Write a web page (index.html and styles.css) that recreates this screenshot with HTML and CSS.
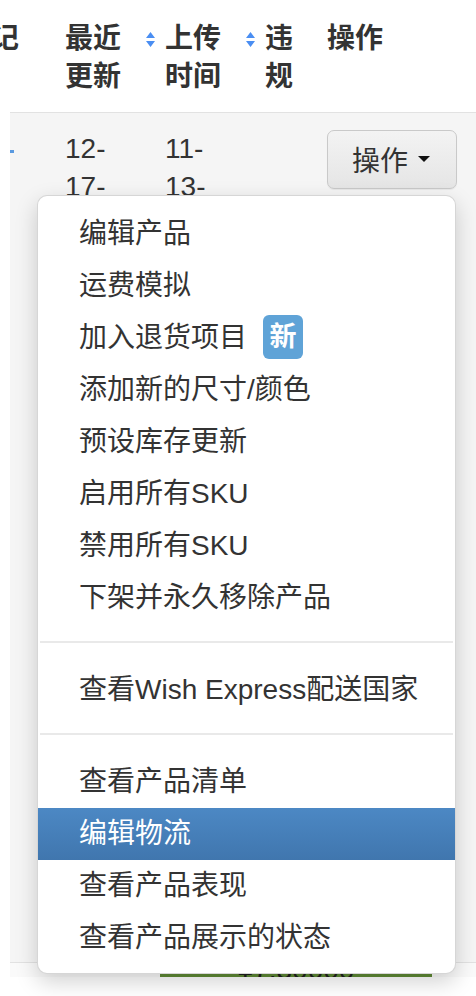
FILE: index.html
```html
<!DOCTYPE html>
<html lang="zh-CN">
<head>
<meta charset="utf-8">
<title>操作</title>
<link rel="stylesheet" href="styles.css">
</head>
<body>
<div class="page">
  <div class="thead">
    <div class="th"><span class="clip"><span class="clip-in">记</span></span></div>
    <div class="th"><span class="tt w2">最近更新</span></div>
    <div class="th"><svg class="sort" viewBox="0 0 9 15" width="9" height="15"><path d="M4.5 0 L9 6 L0 6 Z M0 9 L9 9 L4.5 15 Z" fill="#4a8ef2"/></svg><span class="tt w2">上传时间</span></div>
    <div class="th"><svg class="sort" viewBox="0 0 9 15" width="9" height="15"><path d="M4.5 0 L9 6 L0 6 Z M0 9 L9 9 L4.5 15 Z" fill="#4a8ef2"/></svg><span class="tt w1">违规</span></div>
    <div class="th"><span class="tt">操作</span></div>
  </div>
  <div class="trow">
    <div class="td"><span class="dot"></span></div>
    <div class="td"><span class="date">12-17-2019</span></div>
    <div class="td td-pad"><span class="date">11-13-2019</span></div>
    <div class="td"></div>
    <div class="td td-btn"><button class="btn" type="button">操作<span class="caret"></span></button></div>
  </div>
  <div class="next-row"><div class="price">¥7.30000</div></div>

  <ul class="menu">
    <li class="item">编辑产品</li>
    <li class="item">运费模拟</li>
    <li class="item">加入退货项目<span class="badge">新</span></li>
    <li class="item">添加新的尺寸/颜色</li>
    <li class="item">预设库存更新</li>
    <li class="item">启用所有SKU</li>
    <li class="item">禁用所有SKU</li>
    <li class="item">下架并永久移除产品</li>
    <li class="divider"></li>
    <li class="item">查看Wish Express配送国家</li>
    <li class="divider"></li>
    <li class="item">查看产品清单</li>
    <li class="item active">编辑物流</li>
    <li class="item">查看产品表现</li>
    <li class="item">查看产品展示的状态</li>
  </ul>
</div>
</body>
</html>
```

FILE: styles.css
```css
* { box-sizing: border-box; }

html, body {
  margin: 0;
  padding: 0;
  background: #ffffff;
}

body {
  font-family: "Liberation Sans", "Noto Sans CJK SC", sans-serif;
  font-size: 28px;
  color: #333333;
}

.page {
  position: relative;
  width: 476px;
  height: 996px;
  overflow: hidden;
}

/* header */
.thead {
  display: grid;
  grid-template-columns: 65px 81px 100px 81px 1fr;
  padding: 20px 0 16px;
  line-height: 38px;
  font-weight: bold;
  color: #333333;
}

.th {
  display: flex;
  align-items: flex-start;
}

.clip {
  display: flex;
  justify-content: flex-end;
  width: 19px;
  overflow: hidden;
}

.clip-in {
  flex: none;
}

.tt.w2 { width: 60px; }
.tt.w1 { width: 36px; }

.sort {
  flex: none;
  margin: 12px 10px 0 0;
}

/* body row */
.trow {
  display: grid;
  grid-template-columns: 55px 81px 100px 81px 1fr;
  margin-left: 10px;
  height: 851px;
  background: #f5f5f5;
  border-top: 1px solid #e2e2e2;
  border-bottom: 1px solid #e2e2e2;
}

.td {
  padding-top: 17px;
  line-height: 38px;
}

.td-pad { padding-left: 19px; }

.date {
  display: block;
  width: 50px;
  color: #333333;
}

.dot {
  display: block;
  width: 4px;
  height: 3px;
  margin-top: 20px;
  background: #5a9ae0;
}

.td-btn { padding-top: 17px; }

.btn {
  display: inline-flex;
  align-items: center;
  width: 130px;
  height: 59px;
  padding: 0 0 2px 24px;
  border: 1px solid #c9c9c9;
  border-radius: 7px;
  background: linear-gradient(#f3f3f3, #e5e5e5);
  font-family: "Liberation Sans", "Noto Sans CJK SC", sans-serif;
  font-size: 28px;
  color: #333333;
  box-shadow: 0 1px 1px rgba(0,0,0,0.06);
}

.caret {
  display: inline-block;
  width: 0;
  height: 0;
  margin-left: 10px;
  border-top: 6px solid #111;
  border-left: 6px solid transparent;
  border-right: 6px solid transparent;
}

/* next row under the menu */
.next-row {
  margin-left: 10px;
  height: 14px;
  background: #fafafa;
}

.price {
  margin-left: 150px;
  width: 272px;
  height: 14px;
  overflow: hidden;
  background: #5f8a35;
  color: #1f1f1f;
  font-size: 28px;
  line-height: 14px;
  text-align: center;
}

/* dropdown menu */
.menu {
  position: absolute;
  top: 195px;
  left: 37px;
  width: 419px;
  margin: 0;
  padding: 12px 0 9px;
  list-style: none;
  background: #ffffff;
  border: 1px solid rgba(0,0,0,0.16);
  border-radius: 10px;
  box-shadow: 0 8px 22px rgba(0,0,0,0.18);
}

.item {
  height: 52px;
  line-height: 52px;
  padding-left: 41px;
  color: #333333;
  white-space: nowrap;
}

.item.active {
  background: linear-gradient(#4c88c4, #4076ae);
  color: #ffffff;
}

.divider {
  height: 2px;
  margin: 17px 2px 21px;
  background: #e9e9e9;
}

.badge {
  display: inline-block;
  vertical-align: middle;
  width: 40px;
  height: 44px;
  margin: -6px 0 0 16px;
  border-radius: 6px;
  background: #5fa3d7;
  color: #ffffff;
  font-weight: bold;
  font-size: 27px;
  line-height: 44px;
  text-align: center;
}
```
